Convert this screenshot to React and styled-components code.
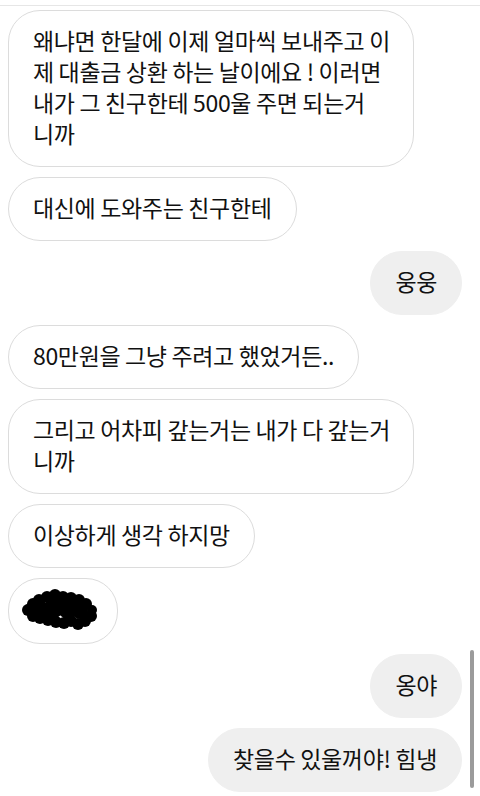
import React from "react";
import styled, { createGlobalStyle } from "styled-components";

const GlobalStyle = createGlobalStyle`
  html, body {
    margin: 0;
    padding: 0;
    background: #fff;
  }
  body {
    font-family: "Noto Sans CJK KR", "Noto Sans", sans-serif;
    color: #111;
  }
`;

const Screen = styled.div`
  position: relative;
  width: 480px;
  height: 796px;
  overflow: hidden;
  background: #fff;
  border-top: 1px solid #e6e6e6;
  margin-top: 5px;
  box-sizing: border-box;
`;

const Thread = styled.div`
  display: flex;
  flex-direction: column;
  gap: 10px;
  padding: 4px 18px 0 8px;
`;

const Row = styled.div`
  display: flex;
  justify-content: ${props => (props.$mine ? "flex-end" : "flex-start")};
`;

const Bubble = styled.div`
  box-sizing: border-box;
  width: ${props => (props.$wide ? "406px" : "auto")};
  padding: ${props => (props.$compact ? "9px 18px 11px 12px" : "14px 24px 17px")};
  border-radius: 32px;
  font-size: 23px;
  line-height: 31px;
  letter-spacing: -0.35px;
  background: ${props => (props.$mine ? "#efefef" : "#fff")};
  border: 1px solid ${props => (props.$mine ? "#efefef" : "#dcdcdc")};
`;

const Line = styled.span`
  display: block;
  height: 31px;
  white-space: nowrap;
`;

const ScrollThumb = styled.div`
  position: absolute;
  right: 6px;
  top: 644px;
  width: 4px;
  height: 138px;
  border-radius: 2px;
  background: #9b9b9b;
`;

const messages = [
  {
    lines: ["왜냐면 한달에 이제 얼마씩 보내주고 이", "제 대출금 상환 하는 날이에요 ! 이러면", "내가 그 친구한테 500울 주면 되는거", "니까"],
    wide: true,
  },
  { lines: ["대신에 도와주는 친구한테"] },
  { lines: ["웅웅"], mine: true },
  { lines: ["80만원을 그냥 주려고 했었거든.."] },
  { lines: ["그리고 어차피 갚는거는 내가 다 갚는거", "니까"], wide: true },
  { lines: ["이상하게 생각 하지망"] },
  { redacted: true },
  { lines: ["옹야"], mine: true },
  { lines: ["찾을수 있울꺼야! 힘냉"], mine: true },
];

function Scribble() {
  const blobs = [
    [7, 22, 6], [12, 16, 6], [18, 12, 6], [26, 9, 6], [34, 7, 6], [42, 9, 6],
    [50, 10, 6], [58, 12, 6], [65, 16, 6], [71, 22, 5], [70, 28, 6], [64, 33, 6],
    [57, 36, 6], [50, 33, 6], [43, 35, 6], [35, 34, 6], [27, 32, 6], [19, 30, 6],
    [12, 28, 6], [9, 20, 5], [20, 22, 9], [33, 20, 10], [47, 21, 10], [59, 23, 8],
  ];
  return (
    <svg width="78" height="44" viewBox="0 0 78 44" style={{ display: "block" }}>
      {blobs.map(([cx, cy, r], i) => (
        <circle key={i} cx={cx} cy={cy} r={r} fill="#000" />
      ))}
    </svg>
  );
}

export default function App() {
  return (
    <>
      <GlobalStyle />
      <Screen>
        <Thread>
          {messages.map((m, i) => (
            <Row key={i} $mine={m.mine}>
              <Bubble $mine={m.mine} $wide={m.wide} $compact={m.redacted}>
                {m.redacted ? <Scribble /> : m.lines.map((l, j) => <Line key={j}>{l}</Line>)}
              </Bubble>
            </Row>
          ))}
        </Thread>
        <ScrollThumb />
      </Screen>
    </>
  );
}
